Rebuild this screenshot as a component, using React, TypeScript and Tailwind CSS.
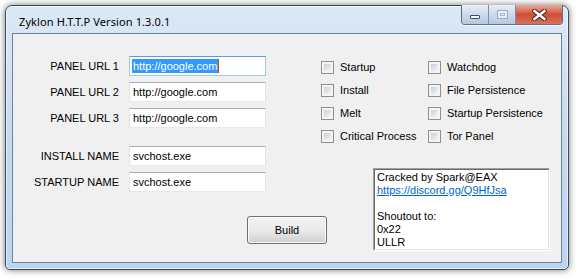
import React from "react";

const labelFont = "font-['Liberation_Sans',Arial,sans-serif] text-[11px] text-black";

const TextBox = ({ value, focused }: { value: string; focused?: boolean }) => (
    <div
        className={
            focused
                ? "w-[137px] h-[20px] flex items-center pl-[2px] bg-white border border-[#a4c9e3] border-t-[#569de5]"
                : "w-[137px] h-[20px] flex items-center pl-[2px] bg-white border border-[#e2e3ea] border-t-[#abadb3] border-b-[#e3e9ef]"
        }
    >
        {focused ? (
            <span className="flex items-center">
                <span className="bg-[#3399ff] text-white leading-[14px] px-[1px]">{value}</span>
                <span className="w-[1px] h-[14px] bg-[#b05a10]" />
            </span>
        ) : (
            <span className="px-[1px] leading-[14px]">{value}</span>
        )}
    </div>
);

const FormRow = ({ label, value, focused }: { label: string; value: string; focused?: boolean }) => (
    <div className="flex items-center">
        <span className="w-[107px] text-right pr-[1px] whitespace-nowrap">{label}</span>
        <span className="w-[9px]" />
        <TextBox value={value} focused={focused} />
    </div>
);

const Check = ({ label }: { label: string }) => (
    <div className="h-[23px] flex items-start">
        <div className="w-[13px] h-[13px] border border-[#8e8f8f] bg-[#f4f4f4] p-[2px]">
            <div className="w-full h-full bg-gradient-to-br from-[#cbcfd5] to-[#f6f6f6]" />
        </div>
        <span className="ml-[6px] leading-[13px] whitespace-nowrap">{label}</span>
    </div>
);

const CaptionButtons = () => (
    <div className="flex -mt-[1px] h-[20px] border border-[#5d6f85] border-t-0 rounded-b-[4px] overflow-hidden shadow-[0_1px_0_rgba(255,255,255,0.7)]">
        <div className="w-[27px] h-full flex items-end justify-center pb-[5px] bg-gradient-to-b from-[#e6eef7] via-[#cbdaeb] to-[#b4c9e1] border-r border-[#7f90a6]">
            <div className="w-[10px] h-[4px] bg-white border border-[#3d4a5b] rounded-[1px]" />
        </div>
        <div className="w-[27px] h-full flex items-center justify-center bg-gradient-to-b from-[#e6eef7] via-[#cbdaeb] to-[#b4c9e1] border-r border-[#7f90a6]">
            <div className="w-[11px] h-[9px] border border-[#9aa9bb] bg-[#e8eef5] p-[2px]">
                <div className="w-full h-full border border-[#a9b7c7]" />
            </div>
        </div>
        <div className="w-[46px] h-full flex items-center justify-center bg-gradient-to-b from-[#e9a99b] via-[#cf4b36] to-[#d9735c]">
            <svg width="15" height="12" viewBox="0 0 15 12">
                <path d="M2.5 2 L12.5 10 M12.5 2 L2.5 10" stroke="#4a2520" strokeWidth="4.5" strokeLinecap="square" />
                <path d="M2.5 2 L12.5 10 M12.5 2 L2.5 10" stroke="#ffffff" strokeWidth="2.5" strokeLinecap="square" />
            </svg>
        </div>
    </div>
);

export default function App() {
    return (
        <div className="w-[576px] h-[278px] bg-white pt-[5px] pl-[5px]">
            <div className="w-[564px] h-[265px] flex flex-col border border-[#3a4a5c] rounded-t-[7px] rounded-b-[5px] bg-gradient-to-b from-[#dce9f6] via-[#c5daf0] to-[#bcd5ef] shadow-[0_0_7px_rgba(0,0,0,0.55),inset_0_0_0_1px_rgba(255,255,255,0.6)] px-[6px] pb-[6px]">
                <div className="h-[27px] flex items-start justify-between">
                    <span className="pl-[7px] pt-[9px] font-['Noto_Sans',sans-serif] text-[11px] tracking-[0.1px] leading-[14px] text-black whitespace-nowrap">
                        Zyklon H.T.T.P Version 1.3.0.1
                    </span>
                    <div className="mr-[-1px]">
                        <CaptionButtons />
                    </div>
                </div>
                <div className={`flex-1 flex bg-[#f0f0f0] border border-[#6f8297] ${labelFont}`}>
                    <div className="w-[295px] flex flex-col pt-[22px]">
                        <div className="flex flex-col gap-[6px]">
                            <FormRow label="PANEL URL 1" value="http://google.com" focused />
                            <FormRow label="PANEL URL 2" value="http://google.com" />
                            <FormRow label="PANEL URL 3" value="http://google.com" />
                        </div>
                        <div className="flex flex-col gap-[6px] mt-[18px]">
                            <FormRow label="INSTALL NAME" value="svchost.exe" />
                            <FormRow label="STARTUP NAME" value="svchost.exe" />
                        </div>
                        <button className="ml-[234px] mt-[24px] w-[80px] h-[28px] rounded-[3px] border border-[#707070] bg-gradient-to-b from-[#f2f2f2] via-[#ebebeb] to-[#cfcfcf] shadow-[inset_0_0_0_1px_#fcfcfc] text-[11px] text-black">
                            Build
                        </button>
                    </div>
                    <div className="flex flex-col pt-[27px] pl-[13px]">
                        <div className="flex">
                            <div className="w-[107px] flex flex-col">
                                <Check label="Startup" />
                                <Check label="Install" />
                                <Check label="Melt" />
                                <Check label="Critical Process" />
                            </div>
                            <div className="flex flex-col">
                                <Check label="Watchdog" />
                                <Check label="File Persistence" />
                                <Check label="Startup Persistence" />
                                <Check label="Tor Panel" />
                            </div>
                        </div>
                        <div className="ml-[52px] mt-[15px] w-[177px] h-[83px] bg-white border border-[#a0a0a0] border-r-white border-b-white">
                            <div className="w-full h-full border border-[#696969] border-r-[#e3e3e3] border-b-[#e3e3e3] pl-[2px] pt-[1px] leading-[13px]">
                                <div>Cracked by Spark@EAX</div>
                                <div className="text-[#0066cc] underline">https://discord.gg/Q9HfJsa</div>
                                <div className="h-[13px]" />
                                <div>Shoutout to:</div>
                                <div>0x22</div>
                                <div>ULLR</div>
                            </div>
                        </div>
                    </div>
                </div>
            </div>
        </div>
    );
}
